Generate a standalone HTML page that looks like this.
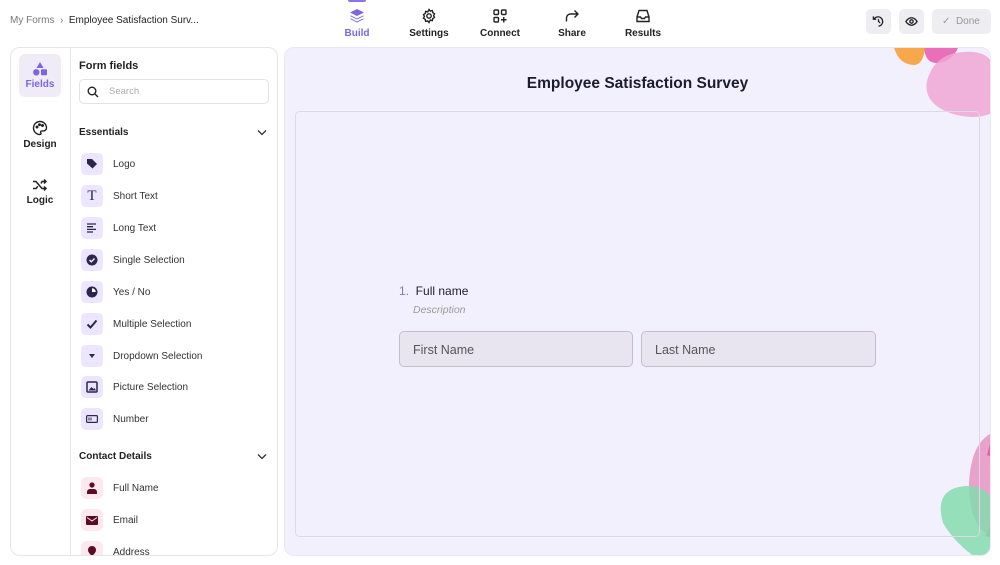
<!DOCTYPE html>
<html><head><meta charset="utf-8"><style>
*{box-sizing:border-box;margin:0;padding:0}
body{width:1000px;height:565px;overflow:hidden;background:#fff;font-family:"Liberation Sans",sans-serif;color:#1d1b2e;position:relative}
.abs{position:absolute}
.bc{left:10px;top:15px;font-size:10px;color:#777}
.bc b{font-weight:normal;color:#222}
.tab{top:8px;width:70px;text-align:center;font-size:10px;font-weight:bold;color:#222}
.tab svg{display:block;margin:0 auto 4px}
.btn{top:9px;height:25px;border-radius:5px;background:#ededf2}
.panel{left:10px;top:47px;width:268px;height:509px;border:1px solid #e6e6ea;border-radius:10px;overflow:hidden}
.rail{position:absolute;left:0;top:0;width:60px;height:100%;border-right:1px solid #e6e6ea}
.ri{position:absolute;left:8px;width:42px;height:43px;border-radius:6px;text-align:center;font-size:10px;font-weight:bold;color:#222}
.ri svg{display:block;margin:8px auto 3px}
.item{position:absolute;left:70px;font-size:10px;color:#333;height:22px;line-height:22px}
.ic{position:absolute;left:0;top:0;width:22px;height:22px;border-radius:5px;background:#ebe6fd}
.item span{position:absolute;left:32px;top:1px;white-space:nowrap}
.sec{position:absolute;left:68px;font-size:10px;font-weight:bold;color:#222}
.chev{position:absolute;left:246px}
.canvas{left:284px;top:47px;width:707px;height:509px;border-radius:10px;background:#f3f0fd;overflow:hidden;border:1px solid #ebe7f7}
.inp{top:331px;height:36px;border:1px solid #c2bfcc;border-radius:5px;background:#e8e5f1;font-size:12.5px;color:#555;padding:11px 0 0 13px}
</style></head><body>
<div class="abs bc">My Forms &nbsp;›&nbsp; <b>Employee Satisfaction Surv...</b></div>

<div class="abs" style="left:348px;top:0;width:18px;height:2px;background:#8a74e8;border-radius:0 0 2px 2px"></div>
<div class="abs tab" style="left:322px;color:#7b66e0">
<svg width="16" height="16" viewBox="0 0 16 16"><path d="M8 1L15 4.5 8 8 1 4.5z" fill="#7b66e0"/><path d="M2 7.5L8 10.5 14 7.5 15 8 8 11.5 1 8z" fill="#7b66e0"/><path d="M2 10.5L8 13.5 14 10.5 15 11 8 14.5 1 11z" fill="#7b66e0"/></svg>Build</div>
<div class="abs tab" style="left:394px">
<svg width="16" height="16" viewBox="0 0 16 16" fill="none" stroke="#222" stroke-width="1.4"><circle cx="8" cy="8" r="2.2"/><path d="M8 1.5l1.3 1.6 2-.5.5 2 1.7 1.2-.9 1.8.9 1.8-1.7 1.2-.5 2-2-.5L8 14.5l-1.3-1.6-2 .5-.5-2-1.7-1.2.9-1.8-.9-1.8 1.7-1.2.5-2 2 .5z"/></svg>Settings</div>
<div class="abs tab" style="left:465px">
<svg width="16" height="16" viewBox="0 0 16 16" fill="none" stroke="#222" stroke-width="1.4"><rect x="2" y="2" width="4.5" height="4.5" rx="1"/><rect x="9.5" y="2" width="4.5" height="4.5" rx="1"/><rect x="2" y="9.5" width="4.5" height="4.5" rx="1"/><path d="M11.75 9v5.5M9 11.75h5.5"/></svg>Connect</div>
<div class="abs tab" style="left:537px">
<svg width="16" height="16" viewBox="0 0 16 16" fill="none" stroke="#222" stroke-width="1.4"><path d="M2.5 13.5V10a4 4 0 014-4H14M10.5 2.5L14 6l-3.5 3.5"/></svg>Share</div>
<div class="abs tab" style="left:608px">
<svg width="16" height="16" viewBox="0 0 16 16" fill="none" stroke="#222" stroke-width="1.4"><path d="M2 9l2-6.5h8L14 9v4.5H2zM2 9h3.5l1 1.5h3l1-1.5H14"/></svg>Results</div>

<div class="abs btn" style="left:866px;width:25px"><svg class="abs" style="left:6px;top:6px" width="13" height="13" viewBox="0 0 14 14" fill="none" stroke="#222" stroke-width="1.4"><path d="M2.5 4A5 5 0 117 12"/><path d="M1.5 1.5v3h3"/><path d="M7 4.5V7l1.8 1.5"/></svg></div>
<div class="abs btn" style="left:899px;width:25px"><svg class="abs" style="left:6px;top:6px" width="13" height="13" viewBox="0 0 14 14" fill="none" stroke="#222" stroke-width="1.4"><path d="M1 7s2.3-4 6-4 6 4 6 4-2.3 4-6 4-6-4-6-4z"/><circle cx="7" cy="7" r="1.8"/></svg></div>
<div class="abs btn" style="left:932px;width:59px;font-size:10px;color:#999;line-height:25px;padding-left:10px"><span style="font-size:10px">✓</span>&nbsp;&nbsp;Done</div>

<div class="abs panel">
 <div class="rail">
  <div class="ri" style="top:6px;background:#efecf7;color:#7b66e0"><svg width="16" height="14" viewBox="0 0 16 14"><path d="M8 0l3.5 6h-7z" fill="#7b66e0"/><circle cx="4.3" cy="10.3" r="3.2" fill="#7b66e0"/><rect x="9" y="7.3" width="6" height="6" rx="1" fill="#7b66e0"/></svg>Fields</div>
  <div class="ri" style="top:64px"><svg width="16" height="16" viewBox="0 0 16 16" fill="none" stroke="#222" stroke-width="1.4"><path d="M8 1.5a6.5 6.5 0 100 13c1 0 1.3-.8.8-1.6-.6-.9 0-2 1-2h1.7a3 3 0 003-3C14.5 4.3 11.6 1.5 8 1.5z"/><circle cx="5" cy="7" r=".8" fill="#222"/><circle cx="7.5" cy="4.7" r=".8" fill="#222"/><circle cx="10.5" cy="5.5" r=".8" fill="#222"/></svg>Design</div>
  <div class="ri" style="top:122px"><svg width="16" height="14" viewBox="0 0 16 14" fill="none" stroke="#222" stroke-width="1.5"><path d="M1 3.5h3l6 7h4M1 10.5h3l1.8-2.2M9 5.5l1-2h4M12 1.5l2 2-2 2M12 8.5l2 2-2 2"/></svg>Logic</div>
 </div>
 <div class="abs" style="left:68px;top:12px;font-size:11px;font-weight:bold;color:#222">Form fields</div>
 <div class="abs" style="left:68px;top:31px;width:190px;height:25px;border:1px solid #e1e1e6;border-radius:5px;font-size:9.5px;color:#aaa;padding:6px 0 0 29px">Search
  <svg class="abs" style="left:7px;top:6px" width="12" height="12" viewBox="0 0 12 12" fill="none" stroke="#222" stroke-width="1.4"><circle cx="5" cy="5" r="3.8"/><path d="M8 8l3 3"/></svg></div>
 <div class="sec" style="top:79px">Essentials</div>
 <svg class="chev" style="top:81px" width="10" height="7" viewBox="0 0 10 7" fill="none" stroke="#333" stroke-width="1.3"><path d="M1 1.5l4 4 4-4"/></svg>
 <div class="item" style="top:105px"><div class="ic"><svg class="abs" style="left:5px;top:5px" width="12" height="12" viewBox="0 0 12 12"><path d="M1 1h5l5 5-4.5 4.5-5.5-5z" fill="#2c2550"/></svg></div><span>Logo</span></div>
 <div class="item" style="top:137px"><div class="ic" style="font-family:'Liberation Serif',serif;font-size:15px;text-align:center;color:#2c2550;line-height:22px">T</div><span>Short Text</span></div>
 <div class="item" style="top:169px"><div class="ic"><svg class="abs" style="left:6px;top:6px" width="10" height="10" viewBox="0 0 10 10" stroke="#2c2550" stroke-width="1.3"><path d="M0 1h9M0 3.7h6M0 6.4h9M0 9h6"/></svg></div><span>Long Text</span></div>
 <div class="item" style="top:201px"><div class="ic"><svg class="abs" style="left:5px;top:5px" width="12" height="12" viewBox="0 0 12 12"><circle cx="6" cy="6" r="5.5" fill="#2c2550"/><path d="M3.5 6l1.8 1.8 3.2-3.3" stroke="#fff" stroke-width="1.3" fill="none"/></svg></div><span>Single Selection</span></div>
 <div class="item" style="top:233px"><div class="ic"><svg class="abs" style="left:5px;top:5px" width="12" height="12" viewBox="0 0 12 12"><circle cx="6" cy="6" r="5.5" fill="#2c2550"/><path d="M6 6V2.2A3.8 3.8 0 019.8 6z" fill="#fff"/></svg></div><span>Yes / No</span></div>
 <div class="item" style="top:265px"><div class="ic"><svg class="abs" style="left:5px;top:5px" width="12" height="12" viewBox="0 0 12 12" fill="none" stroke="#2c2550" stroke-width="2"><path d="M1.5 6.5l3 3 6-7"/></svg></div><span>Multiple Selection</span></div>
 <div class="item" style="top:297px"><div class="ic"><svg class="abs" style="left:8px;top:9px" width="6" height="4" viewBox="0 0 6 4"><path d="M0 0h6L3 4z" fill="#2c2550"/></svg></div><span>Dropdown Selection</span></div>
 <div class="item" style="top:328px"><div class="ic"><svg class="abs" style="left:5px;top:5px" width="12" height="12" viewBox="0 0 12 12"><rect x="1" y="1" width="10" height="10" rx="1" fill="none" stroke="#2c2550" stroke-width="1.5"/><path d="M2.5 9.5l3-3.5 2 2 1-1 1.5 2.5z" fill="#2c2550"/></svg></div><span>Picture Selection</span></div>
 <div class="item" style="top:360px"><div class="ic"><svg class="abs" style="left:5px;top:7px" width="12" height="8" viewBox="0 0 12 8"><rect x=".6" y=".6" width="10.8" height="6.8" rx="1" fill="none" stroke="#2c2550" stroke-width="1.2"/><path d="M3 2.5v3M5 2.5v3" stroke="#2c2550"/></svg></div><span>Number</span></div>
 <div class="sec" style="top:403px">Contact Details</div>
 <svg class="chev" style="top:405px" width="10" height="7" viewBox="0 0 10 7" fill="none" stroke="#333" stroke-width="1.3"><path d="M1 1.5l4 4 4-4"/></svg>
 <div class="item" style="top:429px"><div class="ic" style="background:#fde8ef"><svg class="abs" style="left:6px;top:5px" width="10" height="12" viewBox="0 0 10 12"><circle cx="5" cy="3" r="2.6" fill="#5a0b25"/><path d="M0 12v-2a3 3 0 013-3h4a3 3 0 013 3v2z" fill="#5a0b25"/></svg></div><span>Full Name</span></div>
 <div class="item" style="top:461px"><div class="ic" style="background:#fde8ef"><svg class="abs" style="left:5px;top:7px" width="12" height="9" viewBox="0 0 12 9"><rect width="12" height="9" rx="1" fill="#5a0b25"/><path d="M1 1.5l5 3.5 5-3.5" stroke="#fde8ef" fill="none"/></svg></div><span>Email</span></div>
 <div class="item" style="top:493px"><div class="ic" style="background:#fde8ef"><svg class="abs" style="left:7px;top:5px" width="8" height="10" viewBox="0 0 8 10"><path d="M4 0a4 4 0 014 4c0 3-4 6-4 6S0 7 0 4a4 4 0 014-4z" fill="#5a0b25"/></svg></div><span>Address</span></div>
</div>

<div class="abs canvas">
 <svg class="abs" style="left:600px;top:-5px" width="107" height="80" viewBox="0 0 107 80">
  <path d="M8 0 Q12 22 30 22 Q40 20 40 0z" fill="#f6a84a"/>
  <path d="M40 -5 Q36 22 55 20 Q72 16 76 -5z" fill="#e86fb8"/>
  <path d="M70 10 Q100 5 107 20 V70 Q90 78 65 70 Q38 60 42 38 Q48 15 70 10z" fill="#efa6d4" opacity=".85"/>
 </svg>
 <svg class="abs" style="left:650px;top:385px" width="57" height="124" viewBox="0 0 57 124">
  <path d="M57 0 Q36 10 34 50 Q34 95 57 104z" fill="#e9a2cc"/>
  <path d="M57 3 L52 22 L57 24z" fill="#e063ae"/>
  <path d="M57 90 L50 103 L57 105z" fill="#e063ae"/>
  <path d="M20 55 Q45 48 57 65 V124 H40 Q20 110 8 90 Q0 62 20 55z" fill="#84dcae" opacity=".85"/>
 </svg>
 <div class="abs" style="left:0;width:100%;top:27px;text-align:center;font-size:15.5px;font-weight:bold;color:#1d1b2e">Employee Satisfaction Survey</div>
 <div class="abs" style="left:10px;top:63px;width:685px;height:426px;border:1px solid #dcd8e8;border-radius:5px"></div>
 <div class="abs" style="left:114px;top:236px;font-size:12px;color:#1d1b2e"><span style="color:#7a80b0">1.</span>&nbsp; Full name</div>
 <div class="abs" style="left:128px;top:256px;font-size:10.5px;font-style:italic;color:#999">Description</div>
</div>
<div class="abs inp" style="left:399px;width:234px">First Name</div>
<div class="abs inp" style="left:641px;width:235px">Last Name</div>
</body></html>
